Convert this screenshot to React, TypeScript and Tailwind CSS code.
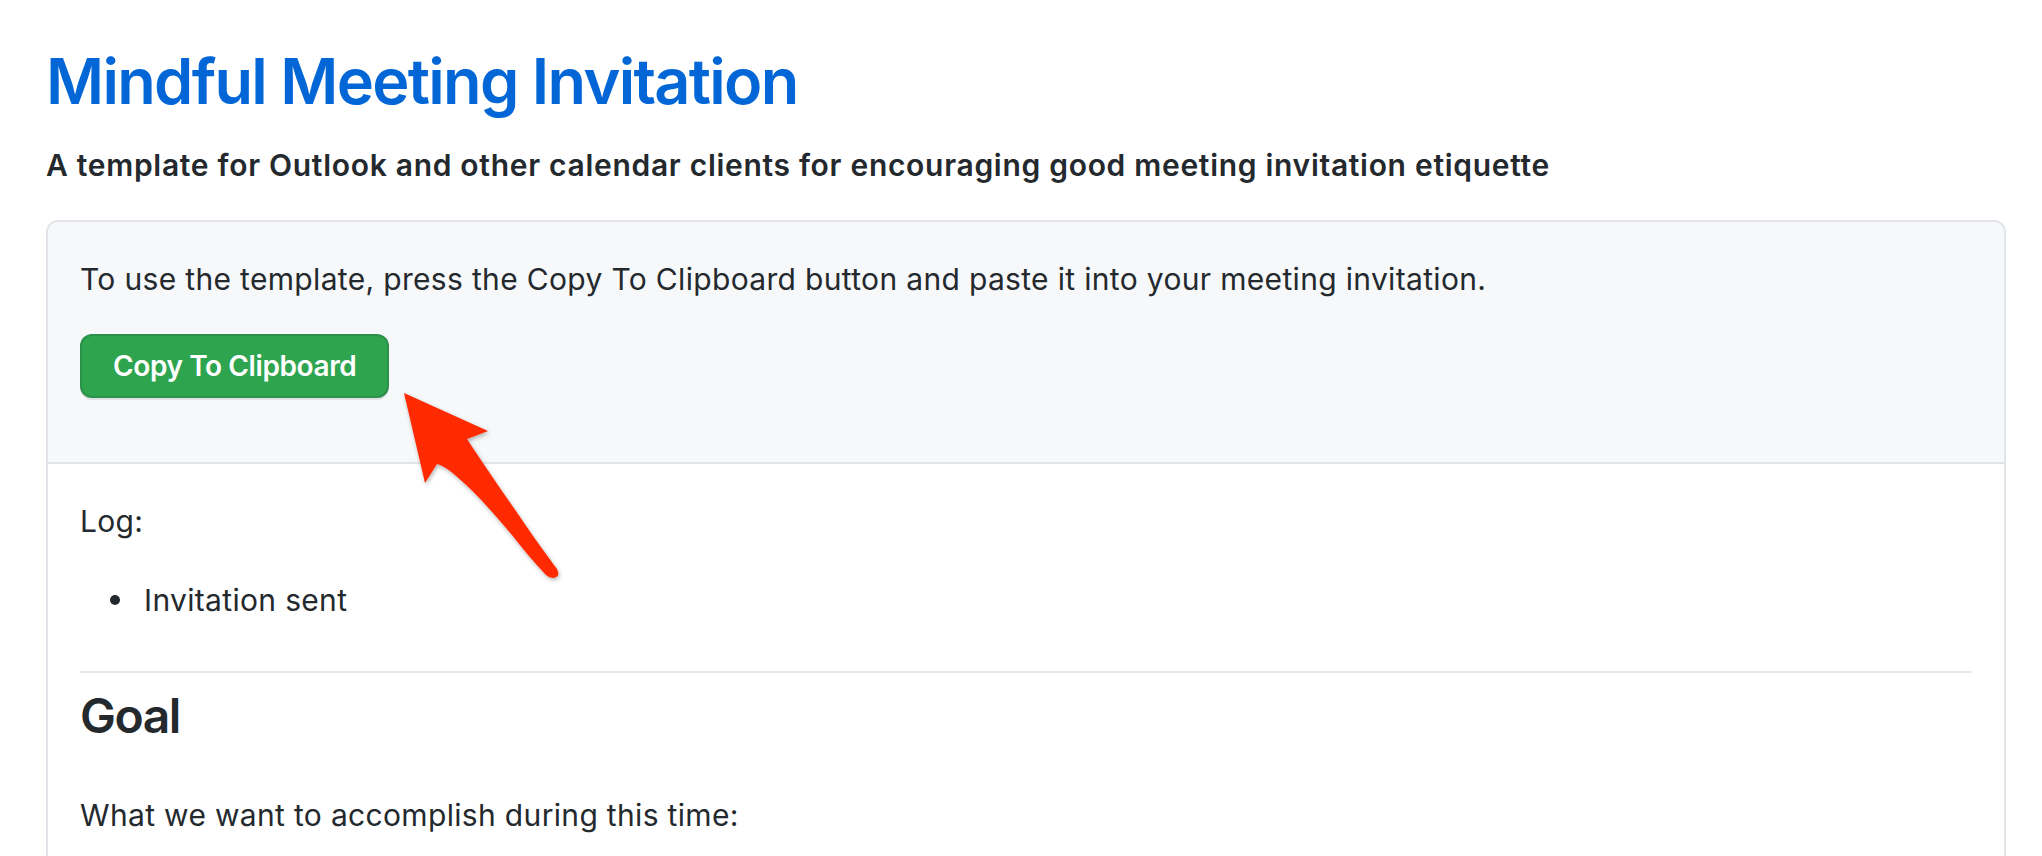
import React from "react";

export default function App() {
  return (
    <div className="relative min-h-[856px] bg-white text-[#24292e] font-['Inter',sans-serif] pl-[46px] pt-[41px] overflow-hidden">
      <h1 className="text-[63px] leading-[80px] font-semibold text-[#0366d6] tracking-[-1.7px]">
        Mindful Meeting Invitation
      </h1>
      <h4 className="mt-[24px] text-[30px] leading-[40px] font-semibold tracking-[0.7px]">
        A template for Outlook and other calendar clients for encouraging good meeting invitation etiquette
      </h4>
      <div className="mt-[35px] w-[1960px] rounded-[12px] border-2 border-[#e1e4e8]">
        <div className="rounded-t-[10px] bg-[#f6f8fa] border-b-2 border-[#e1e4e8] px-[32px] pt-[33px] pb-[64px]">
          <p className="text-[30px] leading-[48px] tracking-[0.33px]">
            To use the template, press the Copy To Clipboard button and paste it into your meeting invitation.
          </p>
          <button className="mt-[31px] h-[64px] px-[31px] rounded-[12px] bg-[#2ea44f] border-2 border-[rgba(27,31,35,0.15)] text-white text-[28px] font-semibold tracking-[-0.4px] shadow-[0_2px_0_rgba(27,31,35,0.1)]">
            Copy To Clipboard
          </button>
        </div>
        <div className="px-[32px] pt-[33px] pb-[200px]">
          <p className="text-[30px] leading-[48px] tracking-[0.33px]">Log:</p>
          <ul className="mt-[31px] text-[30px] leading-[48px] tracking-[0.33px]">
            <li className="flex items-center">
              <span className="w-[64px] flex justify-end pr-[24px]">
                <span className="block w-[10px] h-[10px] rounded-full bg-[#24292e]" />
              </span>
              <span>Invitation sent</span>
            </li>
          </ul>
          <hr className="mt-[47px] border-0 h-[2px] bg-[#e6e8eb]" />
          <h2 className="mt-[13px] text-[48px] leading-[60px] font-semibold tracking-[-1.5px]">Goal</h2>
          <p className="mt-[45px] text-[30px] leading-[48px] tracking-[0.33px]">What we want to accomplish during this time:</p>
        </div>
      </div>
      <svg
        className="absolute left-0 top-0 pointer-events-none"
        width="2042"
        height="856"
        viewBox="0 0 2042 856"
      >
        <defs>
          <filter id="sh" x="-20%" y="-20%" width="140%" height="140%">
            <feDropShadow dx="1" dy="2" stdDeviation="2" floodColor="#000" floodOpacity="0.3" />
          </filter>
        </defs>
        <path
          d="M404,393 L488,431 L467,439 C482,462 500,488 518,514 C532,535 546,554 557,569 Q561,577 553,578 Q549,578 546,575 C533,561 522,548 512,535 C495,515 473,489 450,471 C446,468 441,465 437,464 L425,483 Z"
          fill="#ff2a00"
          filter="url(#sh)"
        />
      </svg>
    </div>
  );
}
